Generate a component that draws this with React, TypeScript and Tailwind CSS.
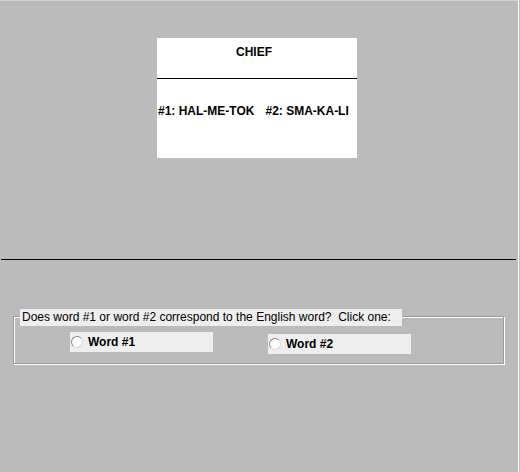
import React from 'react';

const Radio: React.FC<{ label: string; className?: string }> = ({ label, className }) => {
  return (
    <label className={`flex items-center w-[143px] h-[20px] bg-[#eeeeee] pl-px ${className ?? ''}`}>
      <span className="w-[12px] h-[12px] rounded-full bg-white border border-[#8c8c8c] border-b-[#d8d8d8] border-r-[#d8d8d8]" />
      <span className="ml-[5px] text-[12px] font-bold leading-[14px]">{label}</span>
    </label>
  );
};

const App: React.FC = () => {
  return (
    <div className="w-[520px] h-[472px] bg-[#bbbbbb] flex font-['Liberation_Sans',Arial,sans-serif] text-black">
      <div className="w-[518px] border-t border-[#d4d4d4] flex flex-col">
        <div className="ml-[157px] mt-[37px] w-[200px] h-[120px] bg-white flex flex-col">
          <div className="pt-[7px] pr-[6px] text-center text-[12px] font-bold leading-[14px]">CHIEF</div>
          <div className="mt-[19px] h-px bg-black" />
          <div className="mt-[25px] pl-px flex text-[12px] font-bold leading-[14px] whitespace-pre">
            <span>#1: HAL-ME-TOK</span>
            <span className="ml-[11px]">#2: SMA-KA-LI</span>
          </div>
        </div>

        <div className="mt-[101px] ml-px w-[515px] h-px bg-black" />

        <div className="relative mt-[56px] ml-[13px] w-[491px] h-[48px] border border-[#9a9a9a] shadow-[1px_1px_0_#ffffff,inset_1px_1px_0_#ffffff]">
          <div className="absolute left-[6px] -top-[8px] w-[382px] h-[17px] bg-[#eeeeee] pl-[2px] text-[12px] leading-[16px] whitespace-pre">
            Does word #1 or word #2 correspond to the English word?  Click one:
          </div>
          <div className="flex items-start">
            <Radio label="Word #1" className="ml-[56px] mt-[15px]" />
            <Radio label="Word #2" className="ml-[55px] mt-[17px]" />
          </div>
        </div>
      </div>
      <div className="w-px bg-white" />
      <div className="w-px bg-[#bbbbbb]" />
    </div>
  );
};

export default App;
